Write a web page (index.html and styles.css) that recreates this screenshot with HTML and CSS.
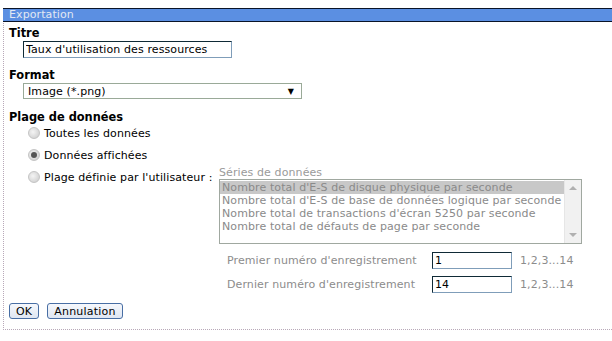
FILE: index.html
```html
<!DOCTYPE html>
<html lang="fr">
<head>
<meta charset="UTF-8">
<title>Exportation</title>
<link rel="stylesheet" href="styles.css">
</head>
<body>

<div class="dialog">
  <div class="dialog__title">Exportation</div>

  <div class="dialog__body">
    <div class="section-label">Titre</div>
    <input type="text" class="text-input title-input" value="Taux d'utilisation des ressources">

    <div class="section-label">Format</div>
    <div class="select">
      <span>Image (*.png)</span>
      <span class="select__arrow">&#9660;</span>
    </div>

    <div class="section-label">Plage de données</div>
    <div class="radios">
      <label class="radio-row"><input type="radio" name="range"> Toutes les données</label>
      <label class="radio-row"><input type="radio" name="range" checked> Données affichées</label>
      <div class="radio-row user-range">
        <label class="radio-row__label"><input type="radio" name="range"> Plage définie par l'utilisateur :</label>
        <div class="series">
          <div class="series__caption">Séries de données</div>
          <div class="listbox">
            <div class="listbox__items">
              <div class="listbox__item selected">Nombre total d'E-S de disque physique par seconde</div>
              <div class="listbox__item">Nombre total d'E-S de base de données logique par seconde</div>
              <div class="listbox__item">Nombre total de transactions d'écran 5250 par seconde</div>
              <div class="listbox__item">Nombre total de défauts de page par seconde</div>
            </div>
            <div class="listbox__scroll">
              <span class="arrow-up"></span>
              <span class="arrow-down"></span>
            </div>
          </div>
        </div>
      </div>
    </div>

    <div class="records">
      <div class="record-row">
        <span class="record-row__label">Premier numéro d'enregistrement</span>
        <input type="text" class="text-input record-input" value="1">
        <span class="record-row__hint">1,2,3...14</span>
      </div>
      <div class="record-row">
        <span class="record-row__label">Dernier numéro d'enregistrement</span>
        <input type="text" class="text-input record-input" value="14">
        <span class="record-row__hint">1,2,3...14</span>
      </div>
    </div>

    <div class="buttons">
      <button class="btn">OK</button>
      <button class="btn">Annulation</button>
    </div>
  </div>
</div>

</body>
</html>
```

FILE: styles.css
```css
body {
  margin: 0;
  background: #fff;
  font-family: "DejaVu Sans", Verdana, sans-serif;
  font-size: 11px;
  letter-spacing: 0.1px;
  color: #000;
}

.dialog {
  margin: 8px 0 0 3px;
  height: 322px;
  box-sizing: border-box;
  border-left: 1px dotted #b8a8b8;
  border-bottom: 1px dotted #b8a8b8;
}

.dialog__title {
  height: 12px;
  line-height: 12px;
  margin-left: -1px;
  padding-left: 6px;
  background: #5b8fe2;
  border-top: 1px solid #0a1428;
  border-bottom: 1px solid #0a1428;
  color: #e2e8f2;
  font-size: 11px;
}

.dialog__body {
  padding: 4px 0 0 5px;
}

.section-label {
  font-weight: bold;
  font-size: 11.4px;
  letter-spacing: 0;
  line-height: 14px;
  height: 15px;
}

.text-input {
  box-sizing: border-box;
  height: 17px;
  margin: 0;
  padding: 0 2px;
  font-family: inherit;
  font-size: 11px;
  letter-spacing: 0.1px;
  color: #000;
  border: 1px solid #7f9db9;
  border-top-color: #0f2a36;
  border-left-color: #0f2a36;
  outline: none;
}

.title-input {
  display: block;
  width: 209px;
  margin: 0 0 10px 14px;
}

.select {
  display: flex;
  justify-content: space-between;
  align-items: center;
  box-sizing: border-box;
  width: 279px;
  height: 16px;
  margin: 0 0 11px 14px;
  padding: 0 7px 0 4px;
  border: 1px solid #9aaa98;
}

.select__arrow {
  font-size: 8px;
}

.radios {
  padding-left: 19px;
  margin-top: -3px;
}

.radio-row {
  display: flex;
  align-items: center;
  height: 22px;
}

.radio-row input,
.radio-row__label input {
  appearance: none;
  flex: none;
  width: 12px;
  height: 12px;
  margin: 0 4px 0 0;
  border-radius: 50%;
  border: 1px solid #c4c4c4;
  background: radial-gradient(circle at 40% 40%, #f4f4f4 0, #d6d6d6 70%, #c2c2c2 100%);
  box-sizing: border-box;
  position: relative;
}

.radio-row input:checked::after {
  content: "";
  position: absolute;
  left: 2px;
  top: 2px;
  width: 6px;
  height: 6px;
  border-radius: 50%;
  background: #555;
}

.user-range {
  align-items: flex-start;
  height: auto;
}

.radio-row__label {
  flex: 0 0 191px;
  display: flex;
  align-items: center;
  height: 12px;
  margin-top: 5px;
  white-space: nowrap;
}

.series {
  margin-top: 1px;
}

.series__caption {
  color: #9a9a9a;
  line-height: 12px;
}

.listbox {
  display: flex;
  width: 363px;
  height: 65px;
  box-sizing: border-box;
  border: 1px solid #a0a8a0;
}

.listbox__items {
  flex: 1;
  padding-top: 1px;
  color: #8a8a8a;
}

.listbox__item {
  height: 13px;
  line-height: 13px;
  padding-left: 2px;
}

.listbox__item.selected {
  background: #c8c8c8;
}

.listbox__scroll {
  position: relative;
  width: 16px;
  background: #f1f1f1;
  border-left: 1px solid #e6e6e6;
}

.arrow-up,
.arrow-down {
  position: absolute;
  left: 4px;
  width: 0;
  height: 0;
  border-left: 4px solid transparent;
  border-right: 4px solid transparent;
}

.arrow-up {
  top: 6px;
  border-bottom: 4px solid #b0b0b0;
}

.arrow-down {
  bottom: 6px;
  border-top: 4px solid #b0b0b0;
}

.records {
  margin: 4px 0 0 218px;
}

.record-row {
  display: flex;
  align-items: center;
  height: 24px;
}

.record-row__label {
  width: 205px;
  color: #8c8c8c;
}

.record-input {
  width: 80px;
  padding: 0 2px;
}

.record-row__hint {
  margin-left: 8px;
  color: #8c8c8c;
}

.buttons {
  display: flex;
  gap: 8px;
  margin-top: 7px;
}

.btn {
  height: 16px;
  padding: 0 6px;
  font-family: inherit;
  font-size: 11px;
  letter-spacing: 0.2px;
  color: #000;
  background: linear-gradient(#f6f8fc, #dfe6f2);
  border: 1px solid #486ea4;
  border-radius: 3px;
  line-height: 13px;
}
```
